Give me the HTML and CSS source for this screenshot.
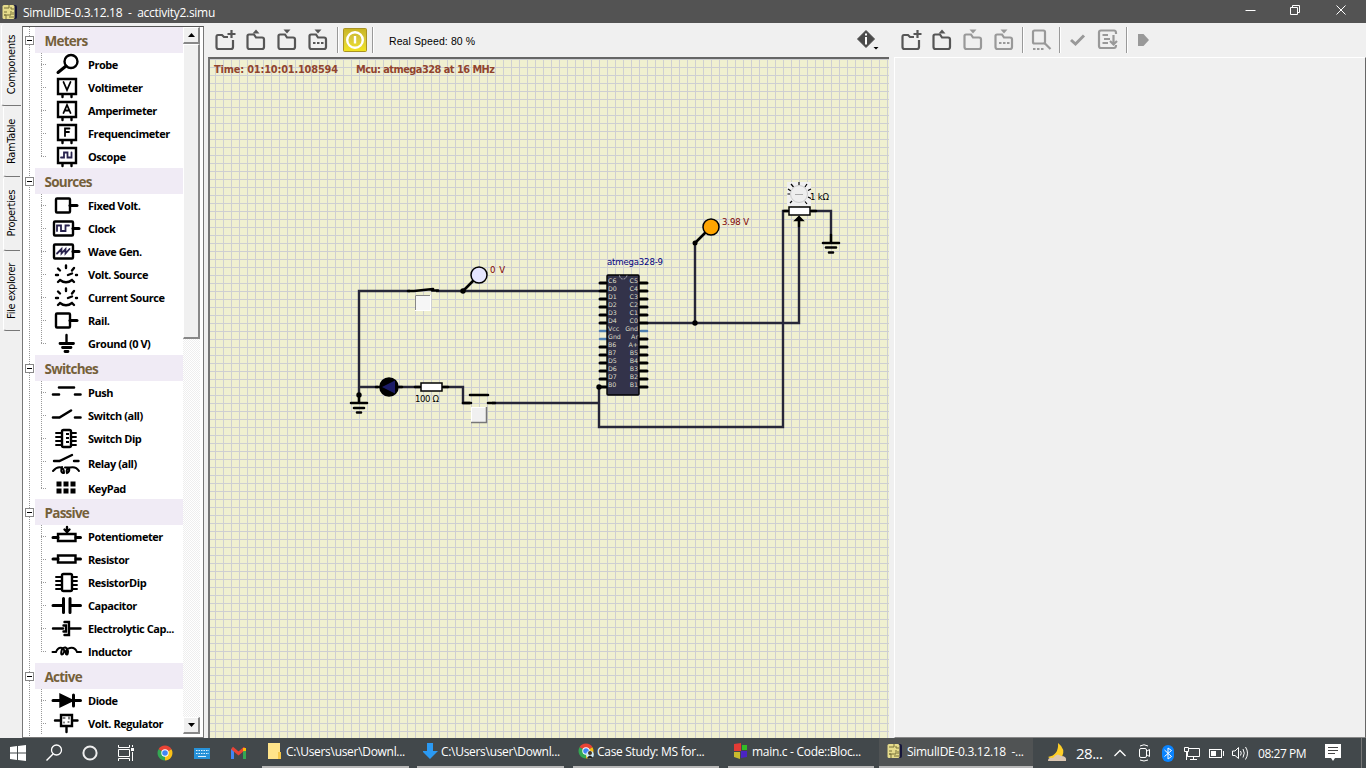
FILE: index.html
```html
<!DOCTYPE html>
<html lang="en">
<head>
<meta charset="utf-8">
<title>SimulIDE-0.3.12.18 - acctivity2.simu</title>
<link rel="stylesheet" href="styles.css">
</head>
<body>
<svg class="defs" aria-hidden="true">
  <defs>
    <linearGradient id="gold" x1="0" y1="0" x2="0" y2="1"><stop offset="0" stop-color="#c9b51f"/><stop offset=".45" stop-color="#d8c83c"/><stop offset="1" stop-color="#f3e51f"/></linearGradient>
    <symbol id="folder" viewBox="0 0 26 26"><path d="M7 7.500H5Q3.500 7.500 3.500 9V20Q3.500 22 5.500 22H18Q20 22 20 20V12.500Q20 10.500 18 10.500H12L10 7.500Z"/></symbol>
    <symbol id="folder-new" viewBox="0 0 26 26"><path d="M15 10H11L9 8H5Q3.500 8 3.500 10V20Q3.500 22 5.500 22H18Q20 22 20 20V13M18.500 3V11M14.500 7H22.500"/></symbol>
    <symbol id="chip" viewBox="0 0 16 16"><rect x="2" y="1" width="13" height="14" rx="2" fill="#15153b"/><rect x="0.500" y="1" width="12" height="14" rx="1.500" fill="#e6dc8b"/><path d="M2 4H7V1M4 15V11H9V7M2 8H5M9 3V5H12M7 13H12M11 8V11" stroke="#77703b" fill="none"/><circle cx="3" cy="11" r="1" fill="#77703b"/></symbol>
    <symbol id="chrome" viewBox="0 0 16 16"><path d="M8 8 1.500 4.300A7.500 7.500 0 0 1 14.500 4.300Z" fill="#e94335"/><path d="M8 8 14.500 4.300A7.500 7.500 0 0 1 8 15.500Z" fill="#fbc116"/><path d="M8 8V15.500A7.500 7.500 0 0 1 1.500 4.300Z" fill="#34a853"/><circle cx="8" cy="8" r="3.700" fill="#fff"/><circle cx="8" cy="8" r="2.800" fill="#4285f4"/></symbol>
  </defs>
</svg>

<header class="titlebar">
  <svg class="app-icon" width="16" height="16"><use href="#chip"/></svg>
  <span class="title">SimulIDE-0.3.12.18&nbsp; -&nbsp; acctivity2.simu</span>
  <svg class="window-buttons" width="116" height="23" viewBox="0 0 116 23" fill="none" stroke="#fff"><path d="M2.500 10.500H12.500M47.500 7.500H54.500V14.500H47.500ZM49.500 7V5.500H56.500V12.500H55M93.500 5.500 102.500 14.500M102.500 5.500 93.500 14.500"/></svg>
</header>

<main class="workspace">
  <nav class="tabs">
    <div class="tab tab-active"><span>Components</span></div>
    <div class="tab"><span>RamTable</span></div>
    <div class="tab t3"><span>Properties</span></div>
    <div class="tab t4"><span>File explorer</span></div>
  </nav>

  <section class="palette">
    <div class="tree">
      <div class="group"><i class="toggle"></i><h2>Meters</h2></div>
      <ul>
        <li><svg viewBox="47 0 38 23"><circle cx="71" cy="8.500" r="6.500"/><path d="M66 13 58 19.500" stroke-width="3"/></svg>Probe</li>
        <li><svg viewBox="47 0 38 23"><path d="M58 3H76V18H58ZM62.500 18V21M71.500 18V21"/><path d="M63.500 6 67 14 70.500 6" stroke-width="1.800"/></svg>Voltimeter</li>
        <li><svg viewBox="47 0 38 23"><path d="M58 3H76V18H58ZM62.500 18V21M71.500 18V21"/><path d="M63.500 14 67 6 70.500 14M65 11.500H69" stroke-width="1.800"/></svg>Amperimeter</li>
        <li><svg viewBox="47 0 38 23"><path d="M58 3H76V18H58ZM62.500 18V21M71.500 18V21"/><path d="M69.500 6.500H65V14M65 10H69" stroke-width="1.800"/></svg>Frequencimeter</li>
        <li><svg viewBox="47 0 38 23"><path d="M58 3H76V18H58ZM62.500 18V21M71.500 18V21"/><path class="wave" d="M61 12.500H64V7.500H67.500V12.500H71.500V7.500"/></svg>Oscope</li>
      </ul>
      <div class="group"><i class="toggle"></i><h2>Sources</h2></div>
      <ul>
        <li><svg viewBox="47 0 38 23"><rect x="56" y="4.500" width="14" height="14" rx="1"/><path d="M70 11.500H77" stroke-width="3"/></svg>Fixed Volt.</li>
        <li><svg viewBox="47 0 38 23"><rect x="54" y="4.500" width="19" height="14" rx="1"/><path d="M73 11.500H79" stroke-width="3"/><path class="wave" d="M57 14V8.500H61V14H65.500V8.500H69"/></svg>Clock</li>
        <li><svg viewBox="47 0 38 23"><rect x="54" y="4.500" width="19" height="14" rx="1"/><path d="M73 11.500H79" stroke-width="3"/><path class="wave" d="M57 13.500 61.500 9V13.500L65.500 9V13.500L69.500 9"/></svg>Wave Gen.</li>
        <li><svg viewBox="47 0 38 23"><path d="M56 12H58M58 5.500 60 7.500M66 2.500V5M74 5 72 7.500M68 12 72 10.500M76 12H77M60 17 58 19M60 17Q66 21.500 72 17L74 19"/></svg>Volt. Source</li>
        <li><svg viewBox="47 0 38 23"><path d="M56 12H58M58 5.500 60 7.500M66 2.500V5M74 5 72 7.500M68 12 72 10.500M76 12H77M60 17 58 19M60 17Q66 21.500 72 17L74 19"/></svg>Current Source</li>
        <li><svg viewBox="47 0 38 23"><rect x="56" y="4.500" width="14" height="14" rx="1"/><path d="M70 11.500H77" stroke-width="3"/></svg>Rail.</li>
        <li><svg viewBox="47 0 38 23"><path d="M66.500 3V11"/><path d="M60 11.500H73.500M62.500 15.500H71M65 19.500H68" stroke-width="2.800"/></svg>Ground (0 V)</li>
      </ul>
      <div class="group"><i class="toggle"></i><h2>Switches</h2></div>
      <ul>
        <li><svg viewBox="47 0 38 23"><path d="M59 6.500H74M53 13.500H59M75 13.500H80.500" stroke-width="2.600"/></svg>Push</li>
        <li><svg viewBox="47 0 38 23"><path d="M53 13.500H59.500L71 6.500M75 13.500H80.500" stroke-width="2.600"/></svg>Switch (all)</li>
        <li><svg viewBox="47 0 38 23"><rect x="62" y="3" width="9" height="17" rx="1.500"/><path d="M56 6H61M56 10H61M56 14H61M56 18H61M72 6H76M72 10H76M72 14H76M72 18H76" stroke-width="1.900"/><path d="M67.500 6V18" stroke-width="3" stroke-linecap="butt" stroke-dasharray="2 2"/></svg>Switch Dip</li>
        <li class="relay"><svg viewBox="47 0 38 27"><path d="M54 11H59.500L72 5M74 11H78.500"/><path d="M53 21Q57 16.500 61 17.500Q64 18 64 23M62 17Q60 22 63 23M65 17.500H70M69 17.500Q70 22 67 23Q66 21 68 17.500M70 17.500Q76 16 79 21" stroke-width="2"/></svg>Relay (all)</li>
        <li class="keypad"><svg viewBox="47 0 38 22"><path d="M56.500 7H75.500M56.500 14H75.500" stroke-width="5" stroke-linecap="butt" stroke-dasharray="5 2"/></svg>KeyPad</li>
      </ul>
      <div class="group"><i class="toggle"></i><h2>Passive</h2></div>
      <ul>
        <li><svg viewBox="47 0 38 23"><path d="M58 9H75.500V16H58ZM67 2V7M64.500 4.500 67 7 69.500 4.500"/><path d="M53 12.500H58M76 12.500H80.500" stroke-width="3"/></svg>Potentiometer</li>
        <li><svg viewBox="47 0 38 23"><path d="M58 7.500H75.500V14.500H58Z"/><path d="M53 11H58M76 11H80.500" stroke-width="3"/></svg>Resistor</li>
        <li><svg viewBox="47 0 38 23"><rect x="62" y="3" width="10" height="17" rx="1.500"/><path d="M56 6H61M56 10H61M56 14H61M56 18H61M73 6H77M73 10H77M73 14H77M73 18H77" stroke-width="1.900"/></svg>ResistorDip</li>
        <li><svg viewBox="47 0 38 23"><path d="M53 11.500H63M70 11.500H80.500M63.500 4.500V18.500M70 4.500V18.500" stroke-width="3"/></svg>Capacitor</li>
        <li><svg viewBox="47 0 38 23"><path d="M53 11.500H63M70 11.500H80.500M64.500 5H69V18H64.500M63.500 8.500H66V14.500H63.500"/></svg>Electrolytic Cap...</li>
        <li><svg viewBox="47 0 38 23"><path d="M52.500 12H56Q58 7 62 8Q66 10 63 14Q60 16 62 9Q66 5 68 11Q68 16 66 14Q65 9 70 8Q75 7 77 12H81" stroke-width="2"/></svg>Inductor</li>
      </ul>
      <div class="group"><i class="toggle"></i><h2>Active</h2></div>
      <ul class="open-end">
        <li><svg viewBox="47 0 38 23"><path d="M53 11.500H80.500M73.500 6V17" stroke-width="3"/><path d="M60.500 6V17L72 11.500Z" fill="#000"/></svg>Diode</li>
        <li><svg viewBox="47 0 38 23"><path d="M61 3H72V14H61ZM55 8.500H61M72 8.500H77.500M66.500 14V20"/><path d="M63 6H65M64 10V11M69 5V7M68 10H69" stroke-width="1"/></svg>Volt. Regulator</li>
      </ul>
    </div>
    <div class="scrollbar">
      <div class="sbtn"><svg width="7" height="4"><path d="M0 4H7L3.500 0Z"/></svg></div>
      <div class="thumb"></div>
      <div class="track"></div>
      <div class="sbtn"><svg width="7" height="4"><path d="M0 0H7L3.500 4Z"/></svg></div>
    </div>
  </section>

  <section class="simulator">
    <div class="toolbar">
      <svg class="ico first" width="26" height="26"><use href="#folder-new"/></svg>
      <svg class="ico" width="26" height="26"><use href="#folder"/><path class="solid" d="M8.500 6.500H15.500L12 2.500Z"/></svg>
      <svg class="ico" width="26" height="26"><use href="#folder"/><path class="solid" d="M8.500 2.500H15.500L12 6.500Z"/></svg>
      <svg class="ico" width="26" height="26"><use href="#folder"/><path class="solid" d="M8.500 2.500H15.500L12 6.500Z"/><path d="M7 16H18" stroke-dasharray="2.500 1.500"/></svg>
      <i class="sep"></i>
      <svg class="power" width="24" height="24"><rect x=".5" y=".5" width="23" height="23" rx="1" fill="url(#gold)" stroke="#a99324"/><circle cx="12" cy="12" r="7.800" fill="none" stroke="#fff" stroke-width="2.400"/><path d="M12 8V15.500" stroke="#fff" stroke-width="2.400"/></svg>
      <i class="sep"></i>
      <span class="speed">Real Speed: 80 %</span>
      <svg class="info" width="24" height="24"><path d="M10 2.500 18.500 11 10 19.500 1.500 11Z" fill="#4a4a4a" stroke="#4a4a4a" stroke-linejoin="round"/><path d="M10 5.500V7.500M10 9V16.500" stroke="#fff" stroke-width="2"/><path d="M17.500 19H22.500L20 21.500Z" fill="#000"/></svg>
    </div>
    <div class="canvas">
      <svg class="circuit" width="679" height="679" viewBox="210 59 679 679">
        <g class="status"><text x="214" y="73" textLength="124">Time: 01:10:01.108594</text><text x="356" y="73" textLength="139">Mcu: atmega328 at 16 MHz</text></g>
        <g class="wire">
          <path d="M359 395V291H410M436 291H599M359 387H378M399 387H420M443 387H463V403H470M492 403H599M599 387V427H783V211H788M647 323H799V226M695 323V243M811 211H831V235"/>
        </g>
        <g class="lead">
          <path d="M408 291H414L433 289M432 290.500H438M376 387H402M415 387H420M443 387H448M463 403H471M470 395H488M488 403H495M463 291 473 281M695 243 705 233M784 211H788M811 211H816M799 226V218"/>
          <path d="M795 220.500H803L799 216.500Z" fill="#000" stroke-width="1.500"/>
          <path d="M359 395V403M351 403H367M354 408H364M357 412.500H361M831 235V243M823 243H839M826 247.500H836M829 252.500H833"/>
          <path d="M600 283H606M600 291H606M600 299H606M600 307H606M600 315H606M600 323H606M600 347H606M600 355H606M600 363H606M600 371H606M600 379H606M600 387H606M640 283H647M640 291H647M640 299H647M640 307H647M640 315H647M640 323H647M640 339H647M640 347H647M640 355H647M640 363H647M640 371H647M640 379H647M640 387H647" stroke-width="3"/>
          <path class="power-pins" d="M600 331H606M600 339H606M641 331H647"/>
        </g>
        <circle cx="359" cy="395" r="2.700"/><circle cx="463" cy="291" r="2.700"/><circle cx="599" cy="387" r="2.700"/><circle cx="695" cy="323" r="2.700"/><circle cx="695" cy="243" r="2.500"/>
        <circle cx="479" cy="275" r="8" fill="#e6e6ff" stroke="#000" stroke-width="1.500"/>
        <circle cx="711" cy="227" r="8" fill="#ffa500" stroke="#000" stroke-width="1.500"/>
        <circle cx="389" cy="387" r="9.800"/><path d="M382 387 395 380.500V393.500Z" fill="#1b1b66"/>
        <rect x="421" y="383" width="21" height="8" fill="#fff" stroke="#000" stroke-width="1.500"/>
        <rect x="415.500" y="295.500" width="15" height="15" fill="#f6f6f6" stroke="#fff"/><path d="M415.500 310V295.500H430" fill="none" stroke="#888"/>
        <rect x="471" y="407" width="16" height="16" fill="#f0f0f0"/><path d="M471.500 422V407.500H486" stroke="#fff" fill="none"/><path d="M471 422.500H486.500V407" stroke="#777" stroke-width="1.500" fill="none"/>
        <rect x="787" y="182" width="24" height="24" fill="#f0f0f0"/>
        <path d="M799 182V185M791 184 793.500 187M787.500 194H790M790 203 792 201M807 184 805 187M811 189 808 190.500M811 198.500 808 197M807 204 805 201.500M788 189 791 191" stroke="#000" stroke-width="1.200"/>
        <circle cx="799" cy="194" r="8.500" fill="#eee" stroke="#ccc"/><path d="M795 194.500H803" stroke="#aaa"/>
        <rect x="789" y="207" width="21" height="8" fill="#fff" stroke="#000" stroke-width="1.500"/>
        <rect x="607" y="275" width="32" height="120" rx="1" fill="#33334a" stroke="#000" stroke-width="1.400"/>
        <path d="M619.500 275.500Q620 279 623 279Q626 279 627 275.500" fill="none" stroke="#bbb" stroke-dasharray="2 1"/>
        <g class="value"><text x="490" y="273" textLength="15">0 V</text><text x="722" y="225" textLength="27">3.98 V</text></g>
        <g class="comp"><text x="415" y="402" textLength="24">100 Ω</text><text x="810" y="200" textLength="19">1 kΩ</text></g>
        <text class="chip-name" x="607" y="265" textLength="56">atmega328-9</text>
        <g class="pin-label">
          <text x="608" y="283">C6</text><text x="608" y="291">D0</text><text x="608" y="299">D1</text><text x="608" y="307">D2</text><text x="608" y="315">D3</text><text x="608" y="323">D4</text><text x="608" y="331">Vcc</text><text x="608" y="339">Gnd</text><text x="608" y="347">B6</text><text x="608" y="355">B7</text><text x="608" y="363">D5</text><text x="608" y="371">D6</text><text x="608" y="379">D7</text><text x="608" y="387">B0</text>
        </g>
        <g class="pin-label end">
          <text x="638" y="283">C5</text><text x="638" y="291">C4</text><text x="638" y="299">C3</text><text x="638" y="307">C2</text><text x="638" y="315">C1</text><text x="638" y="323">C0</text><text x="638" y="331">Gnd</text><text x="638" y="339">Ar</text><text x="638" y="347">A+</text><text x="638" y="355">B5</text><text x="638" y="363">B4</text><text x="638" y="371">B3</text><text x="638" y="379">B2</text><text x="638" y="387">B1</text>
        </g>
      </svg>
    </div>
  </section>

  <section class="editor">
    <div class="toolbar">
      <svg class="ico first" width="26" height="26"><use href="#folder-new"/></svg>
      <svg class="ico" width="26" height="26"><use href="#folder"/><path class="solid" d="M8.500 6.500H15.500L12 2.500Z"/></svg>
      <svg class="ico dim" width="26" height="26"><use href="#folder"/><path class="solid" d="M8.500 2.500H15.500L12 6.500Z"/></svg>
      <svg class="ico dim last" width="26" height="26"><use href="#folder"/><path class="solid" d="M8.500 2.500H15.500L12 6.500Z"/><path d="M7 16H18" stroke-dasharray="2.500 1.500"/></svg>
      <i class="sep"></i>
      <svg class="ico dim find" width="26" height="26"><rect x="4" y="3.500" width="12" height="13" rx="1.500"/><path d="M15 15.500 21.500 22"/><path d="M4 22H15" stroke-dasharray="2.500 1.500"/></svg>
      <i class="sep"></i>
      <svg class="ico dim check" width="26" height="26"><path d="M4 13 8.500 17 17 8.500" stroke-width="3"/></svg>
      <svg class="ico dim upload" width="26" height="26"><path d="M20 7V6Q20 3.500 18 3.500H5Q3 3.500 3 5.500V19Q3 21 5 21H18Q20 21 20 18M6.500 8H12M8 12H14M6.500 16H12M17.500 8V17M14 14 17.500 17.500 21 14"/></svg>
      <i class="sep"></i>
      <svg class="ico dim play" width="26" height="26"><path class="solid" d="M4 7H9.500L15 13 9.500 19H4Z"/></svg>
    </div>
    <div class="document"></div>
  </section>
</main>

<footer class="taskbar">
  <svg width="262" height="30" viewBox="0 0 262 30">
    <path d="M10 9 17 8V14.500H10ZM18 8 26 7V14.500H18ZM10 15.500H17V22L10 21ZM18 15.500H26V23L18 22Z" fill="#fff"/>
    <circle cx="56.500" cy="12" r="5" fill="none" stroke="#fff" stroke-width="1.300"/><path d="M53 16 46.500 22.500" stroke="#fff" stroke-width="1.500"/>
    <circle cx="90" cy="15" r="6.600" fill="none" stroke="#eee" stroke-width="2"/>
    <path d="M118.500 7V9.500H129.500V7M118.500 11.500H129.500V18.500H118.500ZM118.500 23V20.500H129.500V23M132.500 7V9M132.500 14V23" fill="none" stroke="#fff"/><path d="M131 10H134V13H131Z" fill="#fff"/>
    <use href="#chrome" x="157" y="7" width="16" height="16"/>
    <rect x="194" y="10" width="16" height="11" fill="#2792d9"/><path d="M196 12.500H209M196 15.500H209" stroke="#dff2ff" stroke-dasharray="1.500 1"/><path d="M198 18.500H206" stroke="#dff2ff"/>
    <path d="M232.500 21V11" stroke="#4285f4" stroke-width="3"/><path d="M244.500 21V11" stroke="#34a853" stroke-width="3"/><path d="M232 10 238.500 15.500 245 10" fill="none" stroke="#ea4335" stroke-width="3"/><path d="M244.500 13V10" stroke="#fbbc04" stroke-width="3"/>
  </svg>
  <div class="task"><svg width="16" height="18"><path d="M0 1H12V17H0Z" fill="#ffe48a"/><path d="M10 10H13V17H10Z" fill="#f5c84b"/></svg><span>C:\Users\user\Downl...</span></div>
  <div class="task b"><svg width="16" height="18"><path d="M4 1H10V9H15L7 17 -1 9H4Z" fill="#2b9af3"/></svg><span>C:\Users\user\Downl...</span></div>
  <div class="task c"><svg width="16" height="16"><use href="#chrome"/><circle cx="12" cy="11.500" r="3.800" fill="#cce9f6"/><circle cx="12" cy="10" r="2" fill="#432"/><path d="M9 15Q12 10 15 15Z" fill="#222"/></svg><span>Case Study: MS for...</span></div>
  <div class="task d"><svg width="16" height="16"><path d="M1 1 8 0V8H1Z" fill="#e33b35"/><path d="M9 2H14V7H9Z" fill="#32bd26"/><path d="M1 9H7V16L1 14Z" fill="#c9bb2e"/><path d="M8 8H14V14L8 15Z" fill="#4b24c5"/></svg><span>main.c - Code::Bloc...</span></div>
  <div class="task e"><svg width="16" height="16"><use href="#chip"/></svg><span>SimulIDE-0.3.12.18&nbsp; -...</span></div>
  <div class="tray">
    <svg class="moon" width="24" height="24"><path d="M13 2Q21 8 17 16Q10 22 3 16Q14 14 13 2Z" fill="#ffcf27"/><path d="M3 20Q3 16 8 17Q12 11 16 15Q22 15 21 20Z" fill="#dcc7b2"/></svg>
    <span class="temp">28...</span>
    <svg width="140" height="30" viewBox="1110 0 140 30" fill="none" stroke="#fff">
      <path d="M1114.500 18 1120 12.500 1125.500 18" stroke-width="1.300"/>
      <rect x="1139.500" y="10.500" width="7" height="9" rx="1.500"/><path d="M1147 13 1149.500 11.500V18.500L1147 17M1140 8Q1144 5.500 1148 8M1140 22Q1144 24 1148 22"/>
      <rect x="1162" y="7" width="12" height="17" rx="6" fill="#0a84ff" stroke="none"/><path d="M1164.500 12 1171.500 18.500 1168 21V10L1171.500 12.500 1164.500 18.500"/>
      <path d="M1188.500 10.500H1199.500V18.500H1187.500V14M1193.500 18.500V21.500M1190 21.500H1197M1184.500 9.500H1188.500V13.500H1184.500ZM1186.500 14V22"/>
      <rect x="1209.500" y="11.500" width="12" height="8"/><path d="M1223.500 13V18"/><path d="M1211 13H1216V18H1211Z" fill="#fff" stroke="none"/>
      <path d="M1232.500 13H1235L1238.500 9.500V20.500L1235 17.500H1232.500ZM1240.500 13Q1242 15 1240.500 17.500M1243 11Q1245.500 15 1243 19.500M1245.500 9Q1249.500 15 1245.500 21.500"/>
    </svg>
    <span class="clock">08:27 PM</span>
    <svg class="notice" width="16" height="18"><path d="M0 0H16V14H10L8 17 6 14H0Z" fill="#fff"/><path d="M3 3.500H13M3 6.500H13M3 9.500H10" stroke="#444"/></svg>
    <i class="peek"></i>
  </div>
</footer>
</body>
</html>
```
FILE: styles.css
```css
* { box-sizing: border-box; }
body { margin: 0; width: 1366px; height: 768px; overflow: hidden; display: flex; flex-direction: column; background: #f0f0f0; font-family: "Open Sans", "Noto Sans", sans-serif; }
.defs { position: absolute; width: 0; height: 0; }
svg { display: block; flex: none; }
h2, ul { margin: 0; padding: 0; }

.titlebar { height: 23px; flex: none; background: #535353; display: flex; align-items: center; color: #fff; font-size: 12px; white-space: pre; }
.app-icon { margin: 0 5px 0 2px; }
.title { letter-spacing: -.28px; padding-top: 1px; }
.window-buttons { margin-left: auto; margin-right: 7px; }

.workspace { flex: 1; display: flex; min-height: 0; }

.tabs { width: 22px; flex: none; padding-top: 1px; display: flex; flex-direction: column; }
.tab { width: 17px; margin-left: 3px; height: 71px; display: flex; align-items: center; justify-content: center; border-bottom: 1px solid #777; border-left: 1px solid #fff; border-radius: 3px 0 0 3px; font: 11px "DejaVu Sans Condensed", "DejaVu Sans", sans-serif; font-stretch: condensed; letter-spacing: -.35px; color: #000; }
.tab span { writing-mode: vertical-rl; transform: rotate(180deg); white-space: nowrap; line-height: 16px; }
.tab-active { width: 20px; margin-left: 1px; height: 82px; }
.t3 { height: 74px; }
.t4 { height: 80px; }

.palette { width: 182px; flex: none; margin-top: 3px; height: 712px; display: flex; border: 1px solid #777; border-top-color: #555; background: #fff; }
.tree { width: 160px; overflow: hidden; background: repeating-linear-gradient(#999 0 1px, transparent 1px 2px) 6px 0 / 1px 100% no-repeat; }
.group { height: 26px; display: flex; align-items: center; }
.toggle { width: 9px; height: 9px; margin-left: 2px; border: 1px solid #888; background: linear-gradient(#000, #000) center / 5px 1px no-repeat #fff; }
.group h2 { margin-left: 1px; width: 148px; height: 26px; background: #f0ebf5; color: #75603a; font-size: 13.5px; line-height: 29px; padding-left: 9.5px; letter-spacing: -.75px; }
ul { list-style: none; background: repeating-linear-gradient(#999 0 1px, transparent 1px 2px) 18px 0 / 1px calc(100% - 11px) no-repeat; }
.open-end { background-size: 1px 100%; }
li { height: 23px; display: flex; align-items: center; font-size: 11px; font-weight: 700; letter-spacing: -.45px; color: #000; white-space: nowrap; padding-left: 18px; background: repeating-linear-gradient(90deg, #999 0 1px, transparent 1px 2px) 18px 11px / 6px 1px no-repeat; }
li svg { width: 38px; height: 23px; margin: 0 3px 0 6px; fill: none; stroke: #000; stroke-width: 2.4; stroke-linecap: round; }
li .wave { stroke: #29234e; stroke-width: 1.8; }
.relay, .relay svg { height: 27px; }
.keypad, .keypad svg { height: 22px; }
.scrollbar { width: 17px; display: flex; flex-direction: column; height: 707px; }
.sbtn { height: 17px; display: flex; align-items: center; justify-content: center; background: #f0f0f0; border: 1px solid #fff; border-right: 2px solid #888; border-bottom: 2px solid #888; }
.thumb { height: 295px; background: #f0f0f0; border: 1px solid #fff; border-right: 2px solid #888; border-bottom: 2px solid #888; }
.track { flex: 1; background: repeating-conic-gradient(#fff 0 25%, #eee 0 50%) 0 0 / 2px 2px; }

.simulator { width: 686px; flex: none; margin-left: 4px; display: flex; flex-direction: column; }
.toolbar { height: 34px; flex: none; display: flex; align-items: center; }
.ico { fill: none; stroke: #565656; stroke-width: 2.2; margin-right: 5px; }
.ico .solid { fill: #565656; stroke: none; }
.dim { stroke: #999; }
.dim .solid { fill: #999; }
.sep { width: 1px; height: 26px; background: #999; box-shadow: 1px 0 #fff; }
.simulator .first { margin-left: 5px; }
.power { margin: 0 5px; }
.speed { font-family: "Liberation Sans", Arial, sans-serif; font-size: 10.5px; letter-spacing: .1px; margin-left: 16px; white-space: nowrap; padding-top: 1px; }
.info { margin-left: auto; margin-right: 14px; }
.canvas { height: 681px; border-top: 2px solid #666; border-left: 2px solid #777; width: 681px; }
.circuit { background: linear-gradient(90deg, #cecfd2 1px, transparent 1px) 5px 0 / 8px 8px, linear-gradient(#cecfd2 1px, transparent 1px) 0 0 / 8px 8px #f0f0d0; }
.status text { font: 700 9.8px "DejaVu Sans", sans-serif; fill: #91442e; }
.wire { fill: none; stroke: #262638; stroke-width: 2.4; }
.lead { fill: none; stroke: #000; stroke-width: 2.6; stroke-linecap: round; }
.lead .power-pins { stroke: #5080b0; }
.value, .comp, .chip-name { font: 9.5px "DejaVu Sans Condensed", "DejaVu Sans", sans-serif; font-stretch: condensed; }
.value { fill: #800000; }
.comp { fill: #000; }
.chip-name { fill: #000080; }
.pin-label { font: 6.3px "DejaVu Sans", sans-serif; fill: #ddddc8; }
.end { text-anchor: end; }

.editor { flex: 1; display: flex; flex-direction: column; }
.editor .first { margin-left: 5px; }
.last { margin-right: 4px; }
.find { margin: 0 4px 0 6px; }
.check { margin: 0 3px 0 7px; }
.upload { margin-right: 4px; }
.play { margin-left: 7px; }
.document { height: 681px; border: 1px solid #fff; border-right-color: #666; border-bottom-color: #888; }

.taskbar { height: 30px; flex: none; background: #42484b; color: #fff; display: flex; font-size: 12px; white-space: nowrap; }
.task { height: 30px; width: 147px; margin-right: 8px; padding: 0 6px 2px; display: flex; align-items: center; gap: 2px; border-bottom: 2px solid #b8b8b8; letter-spacing: -.3px; flex: none; }
.b { margin-right: 9px; }
.c { width: 146px; margin-right: 9px; }
.c, .d { gap: 3px; padding-left: 5px; }
.d { width: 146px; margin-right: 5px; }
.e { background: #505354; width: 154px; margin-right: 0; padding-left: 8px; gap: 4px; }
.tray { flex: 1; display: flex; align-items: center; }
.moon { margin-left: 12px; }
.temp { font-size: 15px; margin-left: 7px; width: 34px; letter-spacing: -.5px; }
.clock { margin-left: 8px; width: 50px; letter-spacing: -.45px; }
.notice { margin-left: 17px; }
.peek { height: 30px; width: 1px; background: #777; margin-left: auto; margin-right: 4px; }
```
